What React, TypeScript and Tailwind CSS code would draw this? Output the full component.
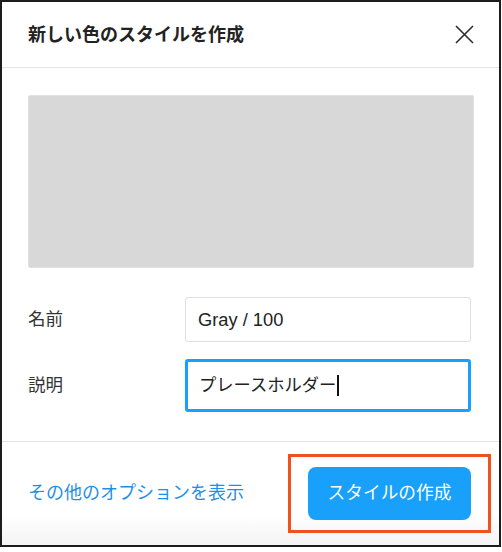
import React from 'react';

const font = { fontFamily: '"Liberation Sans", "Noto Sans CJK JP", sans-serif' };

const CloseIcon = () => (
  <svg width="19" height="19" viewBox="0 0 19 19" fill="none" stroke="#2b2b2b" strokeWidth="1.6">
    <path d="M1 1L18 18M18 1L1 18" />
  </svg>
);

export default function App() {
  return (
    <div className="w-[502px] h-[552px] bg-white" style={font}>
      <div className="w-[501px] h-[547px] border-2 border-[#1c1c1c] flex flex-col bg-white">
        {/* header */}
        <div className="h-[66px] shrink-0 border-b border-[#e4e4e4] flex items-center justify-between pl-[26px] pr-[26px]">
          <h1 className="text-[18px] font-bold text-[#222] leading-none">新しい色のスタイルを作成</h1>
          <button className="mr-[-1px]">
            <CloseIcon />
          </button>
        </div>

        {/* body */}
        <div className="pt-[27px] pb-[29px] pl-[26px] pr-[25px]">
          <div className="h-[173px] bg-[#d8d8d8] border border-[#e2e2e2] rounded-[2px]" />

          <div className="mt-[29px] flex items-center h-[45px]">
            <label className="w-[157px] text-[17.5px] text-[#333]">名前</label>
            <div className="w-[286px] h-[45px] border border-[#e0e0e0] rounded-[3px] flex items-center pl-[12px] text-[18.3px] text-[#222]">
              Gray / 100
            </div>
          </div>

          <div className="mt-[17px] flex items-center h-[53px]">
            <label className="w-[157px] text-[17.5px] text-[#333]">説明</label>
            <div className="w-[286px] h-[53px] border-[3px] border-[#18a0fb] rounded-[3px] flex items-center pl-[11px] text-[17.3px] text-[#222]">
              プレースホルダー
              <span className="inline-block w-[2px] h-[21px] bg-[#111] ml-[1px]" />
            </div>
          </div>
        </div>

        {/* footer */}
        <div className="flex-1 border-t border-[#e4e4e4] bg-gradient-to-b from-white from-70% to-[#f4f4f4] flex items-center justify-between pl-[26px] pr-[8px]">
          <a className="text-[18px] text-[#1f8fe6]">その他のオプションを表示</a>
          <div className="border-[3px] border-[#f0521f] px-[17px] py-[10px] mt-[-1px]">
            <button className="w-[163px] h-[53px] rounded-[8px] bg-[#18a0fb] text-white text-[17.7px]">
              スタイルの作成
            </button>
          </div>
        </div>
      </div>
    </div>
  );
}
